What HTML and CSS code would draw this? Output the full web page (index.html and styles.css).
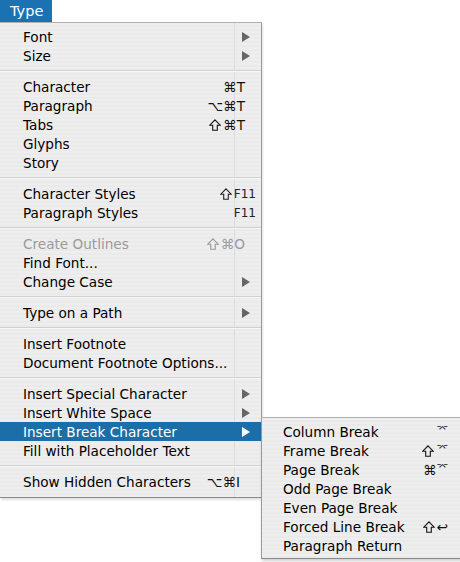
FILE: index.html
```html
<!DOCTYPE html>
<html>
<head>
<meta charset="utf-8">
<link rel="stylesheet" href="styles.css">
</head>
<body>
<div class="screen">
  <div class="title">Type</div>
  <div class="menu">
    <div class="item"><span class="label">Font</span><span class="arrow"></span></div>
    <div class="item"><span class="label">Size</span><span class="arrow"></span></div>
    <div class="sep"></div>
    <div class="item"><span class="label">Character</span><span class="sc">⌘T</span></div>
    <div class="item"><span class="label">Paragraph</span><span class="sc">⌥⌘T</span></div>
    <div class="item"><span class="label">Tabs</span><span class="sc"><svg class="shift" viewBox="0 0 12 12"><path d="M6 0.8 L11.2 6.2 H8.3 V11.2 H3.7 V6.2 H0.8 Z"/></svg>⌘T</span></div>
    <div class="item"><span class="label">Glyphs</span></div>
    <div class="item"><span class="label">Story</span></div>
    <div class="sep"></div>
    <div class="item"><span class="label">Character Styles</span><span class="sc fkey"><svg class="shift" viewBox="0 0 12 12"><path d="M6 0.8 L11.2 6.2 H8.3 V11.2 H3.7 V6.2 H0.8 Z"/></svg>F11</span></div>
    <div class="item"><span class="label">Paragraph Styles</span><span class="sc fkey">F11</span></div>
    <div class="sep"></div>
    <div class="item disabled"><span class="label">Create Outlines</span><span class="sc"><svg class="shift" viewBox="0 0 12 12"><path d="M6 0.8 L11.2 6.2 H8.3 V11.2 H3.7 V6.2 H0.8 Z"/></svg>⌘O</span></div>
    <div class="item"><span class="label">Find Font...</span></div>
    <div class="item"><span class="label">Change Case</span><span class="arrow"></span></div>
    <div class="sep"></div>
    <div class="item"><span class="label">Type on a Path</span><span class="arrow"></span></div>
    <div class="sep"></div>
    <div class="item"><span class="label">Insert Footnote</span></div>
    <div class="item"><span class="label">Document Footnote Options...</span></div>
    <div class="sep"></div>
    <div class="item"><span class="label">Insert Special Character</span><span class="arrow"></span></div>
    <div class="item"><span class="label">Insert White Space</span><span class="arrow"></span></div>
    <div class="item selected"><span class="label">Insert Break Character</span><span class="arrow"></span></div>
    <div class="item"><span class="label">Fill with Placeholder Text</span></div>
    <div class="sep"></div>
    <div class="item"><span class="label">Show Hidden Characters</span><span class="sc narrow">⌥⌘I</span></div>
  </div>
  <div class="submenu">
    <div class="item"><span class="label">Column Break</span><span class="sc small">⌤</span></div>
    <div class="item"><span class="label">Frame Break</span><span class="sc"><svg class="shift" viewBox="0 0 12 12"><path d="M6 0.8 L11.2 6.2 H8.3 V11.2 H3.7 V6.2 H0.8 Z"/></svg><span class="small">⌤</span></span></div>
    <div class="item"><span class="label">Page Break</span><span class="sc">⌘<span class="small">⌤</span></span></div>
    <div class="item"><span class="label">Odd Page Break</span></div>
    <div class="item"><span class="label">Even Page Break</span></div>
    <div class="item"><span class="label">Forced Line Break</span><span class="sc"><svg class="shift" viewBox="0 0 12 12"><path d="M6 0.8 L11.2 6.2 H8.3 V11.2 H3.7 V6.2 H0.8 Z"/></svg>↩</span></div>
    <div class="item"><span class="label">Paragraph Return</span></div>
  </div>
</div>
</body>
</html>
```
FILE: styles.css
```css
html, body {
  margin: 0;
  padding: 0;
  background: #ffffff;
}
.screen {
  position: relative;
  width: 460px;
  height: 562px;
  overflow: hidden;
  font-family: "DejaVu Sans", "Liberation Sans", sans-serif;
  font-size: 13.6px;
  color: #000;
}
.title {
  width: 52px;
  height: 23px;
  box-sizing: border-box;
  padding-left: 10px;
  line-height: 22px;
  font-size: 14.5px;
  color: #fff;
  background: #1b72b2;
}
.menu {
  width: 262px;
  box-sizing: border-box;
  padding: 4px 0 5px 0;
  border-right: 1px solid #9a9a9a;
  border-bottom: 1px solid #8a8a8a;
  border-top: 1px solid #b0b0b0;
  margin-top: -1px;
  background:
    linear-gradient(90deg, transparent 234px, #dcdcdc 234px, #dcdcdc 235px, transparent 235px),
    repeating-linear-gradient(180deg, #eeeeee 0 2px, #eaeaea 2px 4px);
  box-shadow: 1px 2px 2px rgba(0,0,0,0.12);
}
.menu > .item:last-child {
  margin-bottom: 1px;
}
.item {
  display: flex;
  align-items: center;
  height: 19px;
  padding-left: 23px;
  padding-right: 16px;
  white-space: nowrap;
}
.item .label {
  flex: 1;
}
.sc {
  display: flex;
  align-items: center;
  font-size: 13.6px;
  color: #111;
}
.shift {
  width: 12px;
  height: 12px;
  margin-right: 2px;
  fill: none;
  stroke: currentColor;
  stroke-width: 1.1;
  stroke-linejoin: miter;
}
.sc.fkey {
  font-size: 12px;
  margin-right: -11px;
  color: #222;
}
.sc.narrow {
  margin-right: 5px;
}
.arrow {
  width: 0;
  height: 0;
  border-top: 5px solid transparent;
  border-bottom: 5px solid transparent;
  border-left: 8px solid #666;
  margin-right: -5px;
}
.sep {
  height: 12px;
  background: linear-gradient(180deg, transparent 5px, #d0d0d0 5px, #d0d0d0 6px, #f8f8f8 6px, #f8f8f8 7px, transparent 7px);
}
.disabled {
  color: #9a9a9a;
}
.disabled .sc {
  color: #9a9a9a;
}
.selected {
  background: #1b6ea8;
  color: #fff;
}
.selected .arrow {
  border-left-color: #fff;
}
.submenu {
  position: absolute;
  left: 261px;
  top: 417px;
  width: 210px;
  box-sizing: border-box;
  padding: 4px 0 3px 0;
  border-left: 1px solid #9a9a9a;
  border-top: 1px solid #b0b0b0;
  border-bottom: 1px solid #8a8a8a;
  background: repeating-linear-gradient(180deg, #eeeeee 0 2px, #eaeaea 2px 4px);
  box-shadow: 1px 2px 3px rgba(0,0,0,0.2);
}
.submenu .item {
  padding-left: 21px;
  padding-right: 23px;
}
.small {
  font-size: 10px;
  position: relative;
  top: -3px;
}
```
